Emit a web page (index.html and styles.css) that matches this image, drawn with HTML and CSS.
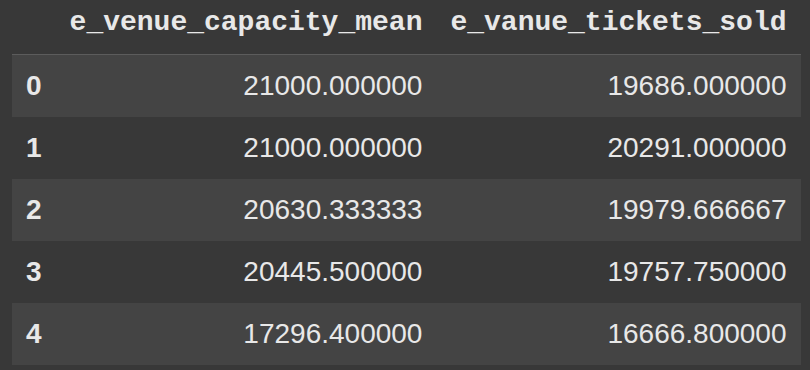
FILE: index.html
```html
<!DOCTYPE html>
<html>
<head>
<meta charset="utf-8">
<link rel="stylesheet" href="styles.css">
</head>
<body>
<table class="df">
  <thead>
    <tr>
      <th class="blank"></th>
      <th class="col">e_venue_capacity_mean</th>
      <th class="col">e_vanue_tickets_sold</th>
    </tr>
  </thead>
  <tbody>
    <tr><th class="idx">0</th><td>21000.000000</td><td>19686.000000</td></tr>
    <tr><th class="idx">1</th><td>21000.000000</td><td>20291.000000</td></tr>
    <tr><th class="idx">2</th><td>20630.333333</td><td>19979.666667</td></tr>
    <tr><th class="idx">3</th><td>20445.500000</td><td>19757.750000</td></tr>
    <tr><th class="idx">4</th><td>17296.400000</td><td>16666.800000</td></tr>
  </tbody>
</table>
</body>
</html>
```
FILE: styles.css
```css
html, body {
  margin: 0;
  padding: 0;
  background: #383838;
}
body {
  padding-left: 12px;
}
.df {
  border-collapse: collapse;
  border-spacing: 0;
  color: #e8e8e8;
  font-family: "Liberation Sans", Arial, sans-serif;
  font-size: 28px;
  line-height: 34px;
}
.df thead th {
  font-family: "Liberation Mono", "Courier New", monospace;
  font-weight: bold;
  text-align: right;
  padding: 6px 14px 14px;
  border-bottom: 1px solid #5c5c5c;
  white-space: nowrap;
}
.df tbody th,
.df tbody td {
  padding: 14px;
  text-align: right;
  white-space: nowrap;
}
.df tbody th.idx {
  text-align: left;
  font-weight: bold;
}
.df tbody tr:nth-child(odd) {
  background: #444444;
}
.df tbody tr:nth-child(even) {
  background: #383838;
}
```
